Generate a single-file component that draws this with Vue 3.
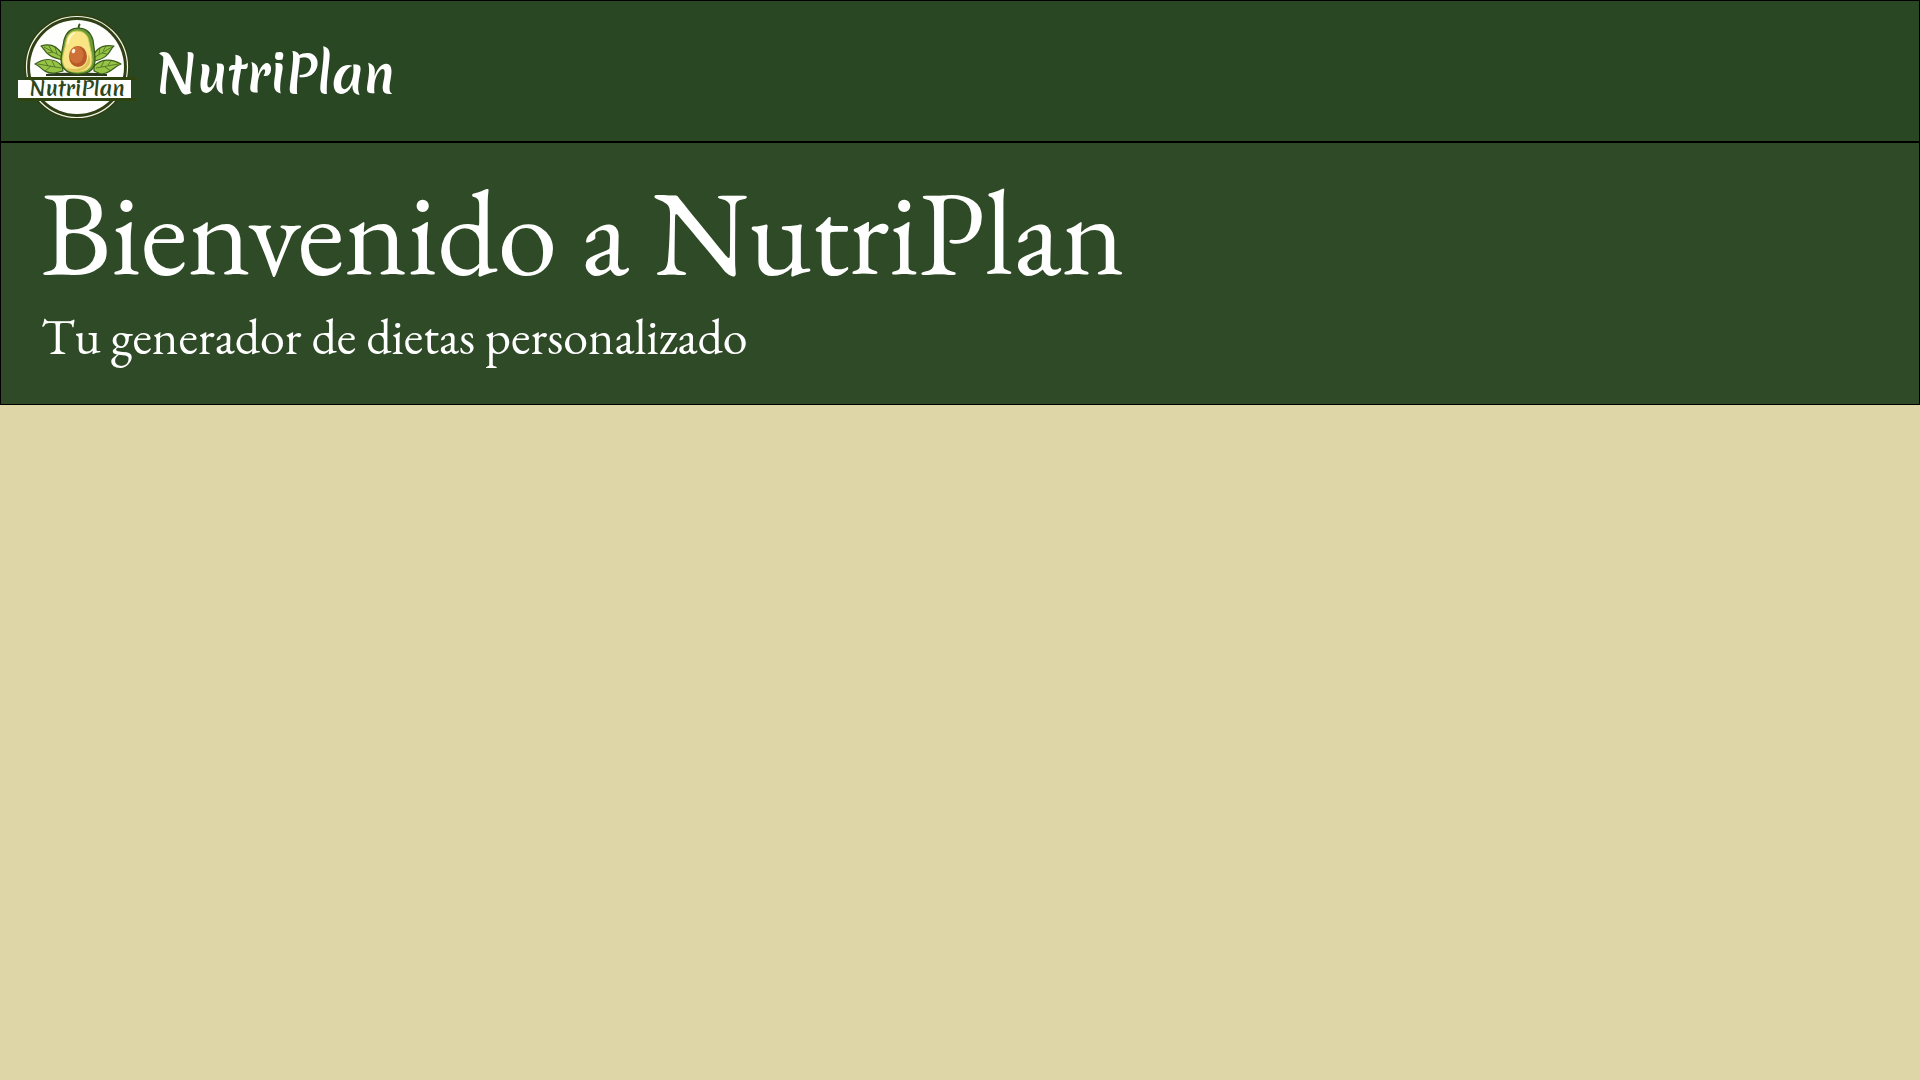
<script setup>
const brand = 'NutriPlan'
const leaves = [
  { shape: 'M62 54 C57 46 50 43 41 46 C45 49 45 57 63 60 Z', vein: 'M44 47 L62 57 M49 46 L52 51 M55 47 L57 54 M48 53 L53 52' },
  { shape: 'M62 66 C55 58 45 58 35 64 C41 66 43 74 55 73 L63 71 Z', vein: 'M38 64 L61 68 M45 61 L48 66 M52 61 L55 67 M45 71 L51 66' },
  { shape: 'M94 54 C99 46 105 45 114 46 C109 50 110 58 94 61 Z', vein: 'M112 47 L95 57 M106 46 L103 51 M100 48 L99 54 M107 54 L102 53' },
  { shape: 'M94 66 C101 59 111 58 121 64 C114 66 112 73 101 74 L94 71 Z', vein: 'M118 64 L96 68 M111 61 L108 65 M104 61 L101 67 M111 71 L105 67' },
]
</script>

<template>
  <div class="page">
    <header class="topbar">
      <svg class="logo" viewBox="18 11 120 120" role="img" aria-label="NutriPlan logo">
        <circle cx="77" cy="67" r="53" fill="#2e4014" />
        <circle cx="77" cy="67" r="50.5" fill="none" stroke="#f2f4e6" stroke-width="1.2" />
        <circle cx="77" cy="67" r="47" fill="#fefefc" />
        <path d="M46 74 Q60 72 77 73 Q94 72 107 74 V76 H46 Z" fill="#29391b" />
        <g v-for="leaf in leaves" :key="leaf.shape" stroke="#3b5d1e" stroke-linejoin="round">
          <path :d="leaf.shape" fill="#98c445" stroke-width="1.2" />
          <path :d="leaf.vein" fill="none" stroke-width="0.7" />
        </g>
        <path d="M79 29 Q78 26 80 24" fill="none" stroke="#345519" stroke-width="1.8" />
        <path
          d="M78 28 C70 28 66 33 64 40 C63 47 61 53 61 60 C61 70 69 74 78 74 C88 74 95 70 95 60 C95 53 94 47 93 40 C91 33 86 28 78 28 Z"
          fill="#6a9a36" stroke="#365719" stroke-width="1.2"
        />
        <path
          d="M77 31 C70 31 67 36 66 42 C65 49 62.500 54 62.500 60 C63 69 69 72 77 72 C87 72 92 68 92 60 C92 53 90 48 89 42 C88 35 84 31 77 31 Z"
          fill="#f9e583" stroke="#c9cd58" stroke-width="1"
        />
        <path d="M88 54 C93 61 89 69 80 71 Q71 73 66 68 Q79 71 85 65 Q89 60 88 54 Z" fill="#dfc25a" />
        <path d="M68 43 Q69 36 74 33" fill="none" stroke="#fff6c8" stroke-width="2" stroke-linecap="round" />
        <ellipse cx="78" cy="56.500" rx="9" ry="10.500" fill="#b9592a" />
        <ellipse cx="76.500" cy="55" rx="7" ry="8.500" fill="#cd7139" />
        <ellipse cx="73.500" cy="51" rx="1.700" ry="2.300" fill="#fff1dc" transform="rotate(25 73.500 51)" />
        <path d="M18 80 H131 V98 H18 Z" fill="#fff" />
        <path d="M27 77 H137 V80 H27 Z M18 98 H137 V101 H18 Z" fill="#2e430f" />
        <text class="logo-text" x="77" y="96" text-anchor="middle">{{ brand }}</text>
      </svg>
      <span class="brand">{{ brand }}</span>
    </header>
    <main class="hero">
      <h1>Bienvenido a NutriPlan</h1>
      <p>Tu generador de dietas personalizado</p>
    </main>
  </div>
</template>

<style>
body {
  margin: 0;
  background: #ded6a6;
}
</style>

<style scoped>
.page {
  color: #fff;
  font-family: 'EB Garamond', 'Liberation Serif', serif;
}

.topbar {
  display: flex;
  align-items: center;
  gap: 18px;
  padding: 10px 17px;
  border: 1px solid #000;
  background: #2a4724;
}

.logo {
  flex: none;
  width: 120px;
  height: 120px;
}

.logo-text {
  fill: #2c471c;
  font: 700 20px Merienda, Lato, sans-serif;
}

.brand {
  padding-top: 6px;
  font: 700 50px/64px Merienda, Lato, sans-serif;
}

.hero {
  padding: 20px 40px 35px;
  border: 1px solid #000;
  background: #2f4a26;
}

.hero h1 {
  margin: 0 0 4px;
  font-size: 120px;
  font-weight: 400;
  line-height: 138px;
}

.hero p {
  margin: 0;
  font-size: 50px;
  line-height: 64px;
}
</style>
